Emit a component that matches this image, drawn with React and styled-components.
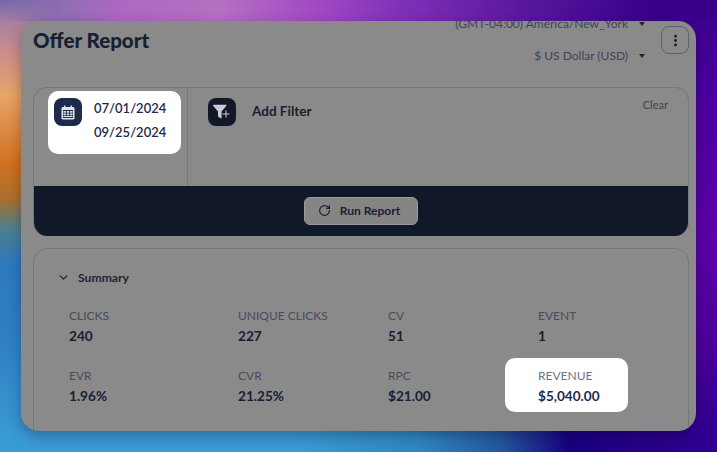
import React from 'react';
import styled, { createGlobalStyle } from 'styled-components';
import { ChevronDown, EllipsisVertical, RotateCw } from 'lucide-react';

const GlobalStyle = createGlobalStyle`
  html, body {
    margin: 0;
    padding: 0;
  }
  body {
    width: 717px;
    height: 452px;
    overflow: hidden;
    font-family: Lato, "Liberation Sans", sans-serif;
    color: #111827;
  }
`;

// only the strips round the window show, so each edge gets its own gradient
const Wallpaper = styled.div`
  width: 717px;
  height: 452px;
  box-sizing: border-box;
  padding: 21px;
  background:
    linear-gradient(90deg, rgba(138, 108, 176, 0) 0, rgba(138, 108, 176, 0.9) 50px, #a968c0 110px, #b56fc2 220px, #a048c4 320px, #8030b8 400px, #5a18a0 520px, #3a0088 650px, #3a008c 717px) 0 0 / 100% 21px no-repeat,
    linear-gradient(90deg, #3a9ad4 0, #3a9ad4 300px, #2f86c0 420px, #24589c 500px, #170080 570px, #260088 640px, #300090 717px) 0 100% / 100% 21px no-repeat,
    linear-gradient(180deg, #7468a8 0, #a880a0 22px, #c98c8e 50px, #e7a566 95px, #d2701f 165px, #a8702f 200px, #4e7f8c 228px, #2d78c0 265px, #2f80c4 340px, #3a9ad4 440px) 0 0 / 60px 100% no-repeat,
    linear-gradient(180deg, #3a008c 0, #4c00a0 100px, #5c00a8 240px, #4a0098 350px, #300090 431px) 100% 0 / 60px 100% no-repeat,
    #8a8a8a;
`;

const ReportWindow = styled.div`
  width: 675px;
  height: 410px;
  box-sizing: border-box;
  padding: 0 7px 0 12px;
  background: #8a8a8a;
  border-radius: 18px;
  overflow: hidden;
  box-shadow: 0 5px 14px rgba(0, 0, 30, 0.3);
`;

const Header = styled.header`
  display: flex;
  justify-content: space-between;
  height: 66px;
`;

const Title = styled.h1`
  margin: 6px 0 0;
  font-size: 20.5px;
  line-height: 26px;
  font-weight: 900;
  color: #172033;
`;

const HeaderRight = styled.div`
  display: flex;
  gap: 16px;
`;

const Selects = styled.div`
  display: flex;
  flex-direction: column;
  justify-content: flex-end;
  align-items: flex-end;
  height: 44px;
  gap: 14px;
`;

const SelectText = styled.div`
  display: flex;
  align-items: center;
  gap: 11px;
  font-size: 12px;
  line-height: 18px;
  color: #3d4454;
  white-space: nowrap;
`;

const Caret = styled.span`
  width: 0;
  height: 0;
  border-left: 3.5px solid transparent;
  border-right: 3.5px solid transparent;
  border-top: 4px solid #1c2333;
`;

const MenuButton = styled.button`
  width: 28px;
  height: 28px;
  margin-top: 5px;
  padding: 0;
  display: flex;
  align-items: center;
  justify-content: center;
  background: transparent;
  border: 1px solid #5c6270;
  border-radius: 8px;
  color: #111827;
`;

const FilterPanel = styled.section`
  width: 656px;
  height: 149px;
  box-sizing: border-box;
  display: flex;
  flex-direction: column;
  border: 1px solid #757780;
  border-bottom: 0;
  border-radius: 14px;
  overflow: hidden;
`;

const FilterBody = styled.div`
  display: flex;
  height: 98px;
`;

const DateColumn = styled.div`
  position: relative;
  width: 154px;
  box-sizing: border-box;
  border-right: 1px solid #757780;
  flex-shrink: 0;
`;

const DateHighlight = styled.div`
  position: absolute;
  left: 14px;
  top: 3px;
  width: 133px;
  height: 63px;
  box-sizing: border-box;
  padding: 7px 6px;
  display: flex;
  gap: 12px;
  background: #fff;
  border-radius: 10px;
`;

const IconTile = styled.div`
  width: 28px;
  height: 28px;
  flex-shrink: 0;
  display: flex;
  align-items: center;
  justify-content: center;
  border-radius: 8px;
  background: ${p => p.$bg};
`;

const Dates = styled.div`
  display: flex;
  flex-direction: column;
  gap: 6px;
  margin-top: 1px;
  font-size: 13px;
  line-height: 18px;
  font-weight: 600;
  color: #1e2a4a;
`;

const FilterArea = styled.div`
  flex: 1;
  display: flex;
  justify-content: space-between;
  padding: 10px 20px 0 20px;
`;

const AddFilter = styled.div`
  display: flex;
  gap: 16px;
  font-size: 13.5px;
  line-height: 26px;
  font-weight: 700;
  color: #1a2030;
`;

const Clear = styled.span`
  margin-top: -1px;
  font-size: 11px;
  line-height: 16px;
  color: #3d4454;
`;

const ActionBar = styled.div`
  height: 50px;
  margin: 0 -1px;
  display: flex;
  justify-content: center;
  align-items: center;
  background: #111827;
`;

const RunButton = styled.button`
  width: 114px;
  height: 28px;
  padding: 0 4px 2px 0;
  display: flex;
  align-items: center;
  justify-content: center;
  gap: 9px;
  background: #858585;
  border: 1px solid #9a9a9a;
  border-radius: 6px;
  font-family: inherit;
  font-size: 12px;
  font-weight: 700;
  color: #1a2030;
`;

const SummaryPanel = styled.section`
  width: 656px;
  height: 300px;
  box-sizing: border-box;
  margin-top: 12px;
  padding: 20px 24px 0 23px;
  border: 1px solid #757780;
  border-radius: 14px;
`;

const SummaryHeader = styled.div`
  display: flex;
  align-items: center;
  gap: 8px;
  height: 16px;
  font-size: 12.2px;
  font-weight: 700;
  color: #1f2636;
`;

const MetricGrid = styled.div`
  display: grid;
  grid-template-columns: 169px 150px 150px 1fr;
  row-gap: 20px;
  margin-top: 23px;
  padding-left: 12px;
`;

const Metric = styled.div`
  position: relative;
  height: 40px;
`;

const Highlight = styled.div`
  position: absolute;
  left: -33px;
  top: -10px;
  width: 123px;
  height: 54px;
  background: #fff;
  border-radius: 10px;
`;

const MetricLabel = styled.div`
  position: relative;
  font-size: 12px;
  line-height: 16px;
  white-space: nowrap;
  color: ${p => (p.$lit ? '#6b7390' : '#484d5c')};
`;

const MetricValue = styled.div`
  position: relative;
  margin-top: 3px;
  font-size: 13.6px;
  line-height: 18px;
  font-weight: 700;
  color: ${p => (p.$lit ? '#1e2a4a' : '#172033')};
`;

const CalendarIcon = () => (
  <svg width="14" height="15" viewBox="0 0 14 15" fill="#dfe3ee">
    <path d="M3 0.5h1.4v1.5h5.2V0.5H11v1.5h1.2c.7 0 1.3.6 1.3 1.3v10c0 .7-.6 1.2-1.3 1.2H1.8c-.7 0-1.3-.5-1.3-1.2v-10c0-.7.6-1.3 1.3-1.3H3z" />
    <path fill="#1e2a4a" d="M2 5h10v8H2z" />
    <path d="M2.5 6h2.4v1.7H2.5zM5.8 6h2.4v1.7H5.8zM9.1 6h2.4v1.7H9.1zM2.5 8.6h2.4v1.7H2.5zM5.8 8.6h2.4v1.7H5.8zM9.1 8.6h2.4v1.7H9.1zM2.5 11.1h9v1H2.5z" />
  </svg>
);

const FilterPlusIcon = () => (
  <svg width="18" height="16" viewBox="0 0 18 16" fill="#c9ccd2">
    <path d="M0.6 0.8h12.3c.5 0 .8.6.5 1L8.6 7.6v6.2c0 .5-.5.8-.9.5L5.3 12.7c-.2-.1-.3-.4-.3-.6V7.6L.1 1.8c-.3-.4 0-1 .5-1z" />
    <path d="M12.5 6.5h1v3h3v1h-3v3h-1v-3h-3v-1h3z" />
  </svg>
);

const metrics = [
  { label: 'CLICKS', value: '240' },
  { label: 'UNIQUE CLICKS', value: '227' },
  { label: 'CV', value: '51' },
  { label: 'EVENT', value: '1' },
  { label: 'EVR', value: '1.96%' },
  { label: 'CVR', value: '21.25%' },
  { label: 'RPC', value: '$21.00' },
  { label: 'REVENUE', value: '$5,040.00', lit: true }
];

const App = () => (
  <>
    <GlobalStyle />
    <Wallpaper>
      <ReportWindow>
        <Header>
          <Title>Offer Report</Title>
          <HeaderRight>
            <Selects>
              <SelectText>
                (GMT-04:00) America/New_York <Caret />
              </SelectText>
              <SelectText>
                $ US Dollar (USD) <Caret />
              </SelectText>
            </Selects>
            <MenuButton aria-label="More">
              <EllipsisVertical size={15} strokeWidth={2.5} />
            </MenuButton>
          </HeaderRight>
        </Header>

        <FilterPanel>
          <FilterBody>
            <DateColumn>
              <DateHighlight>
                <IconTile $bg="#1e2a4a">
                  <CalendarIcon />
                </IconTile>
                <Dates>
                  <span>07/01/2024</span>
                  <span>09/25/2024</span>
                </Dates>
              </DateHighlight>
            </DateColumn>
            <FilterArea>
              <AddFilter>
                <IconTile $bg="#111827">
                  <FilterPlusIcon />
                </IconTile>
                Add Filter
              </AddFilter>
              <Clear>Clear</Clear>
            </FilterArea>
          </FilterBody>
          <ActionBar>
            <RunButton>
              <RotateCw size={13} strokeWidth={2.2} />
              Run Report
            </RunButton>
          </ActionBar>
        </FilterPanel>

        <SummaryPanel>
          <SummaryHeader>
            <ChevronDown size={13} strokeWidth={2.5} />
            Summary
          </SummaryHeader>
          <MetricGrid>
            {metrics.map(m => (
              <Metric key={m.label}>
                {m.lit && <Highlight />}
                <MetricLabel $lit={m.lit}>{m.label}</MetricLabel>
                <MetricValue $lit={m.lit}>{m.value}</MetricValue>
              </Metric>
            ))}
            <Metric>
              <MetricLabel>REPORTED TRAFFIC ONLY</MetricLabel>
            </Metric>
          </MetricGrid>
        </SummaryPanel>
      </ReportWindow>
    </Wallpaper>
  </>
);

export default App;
